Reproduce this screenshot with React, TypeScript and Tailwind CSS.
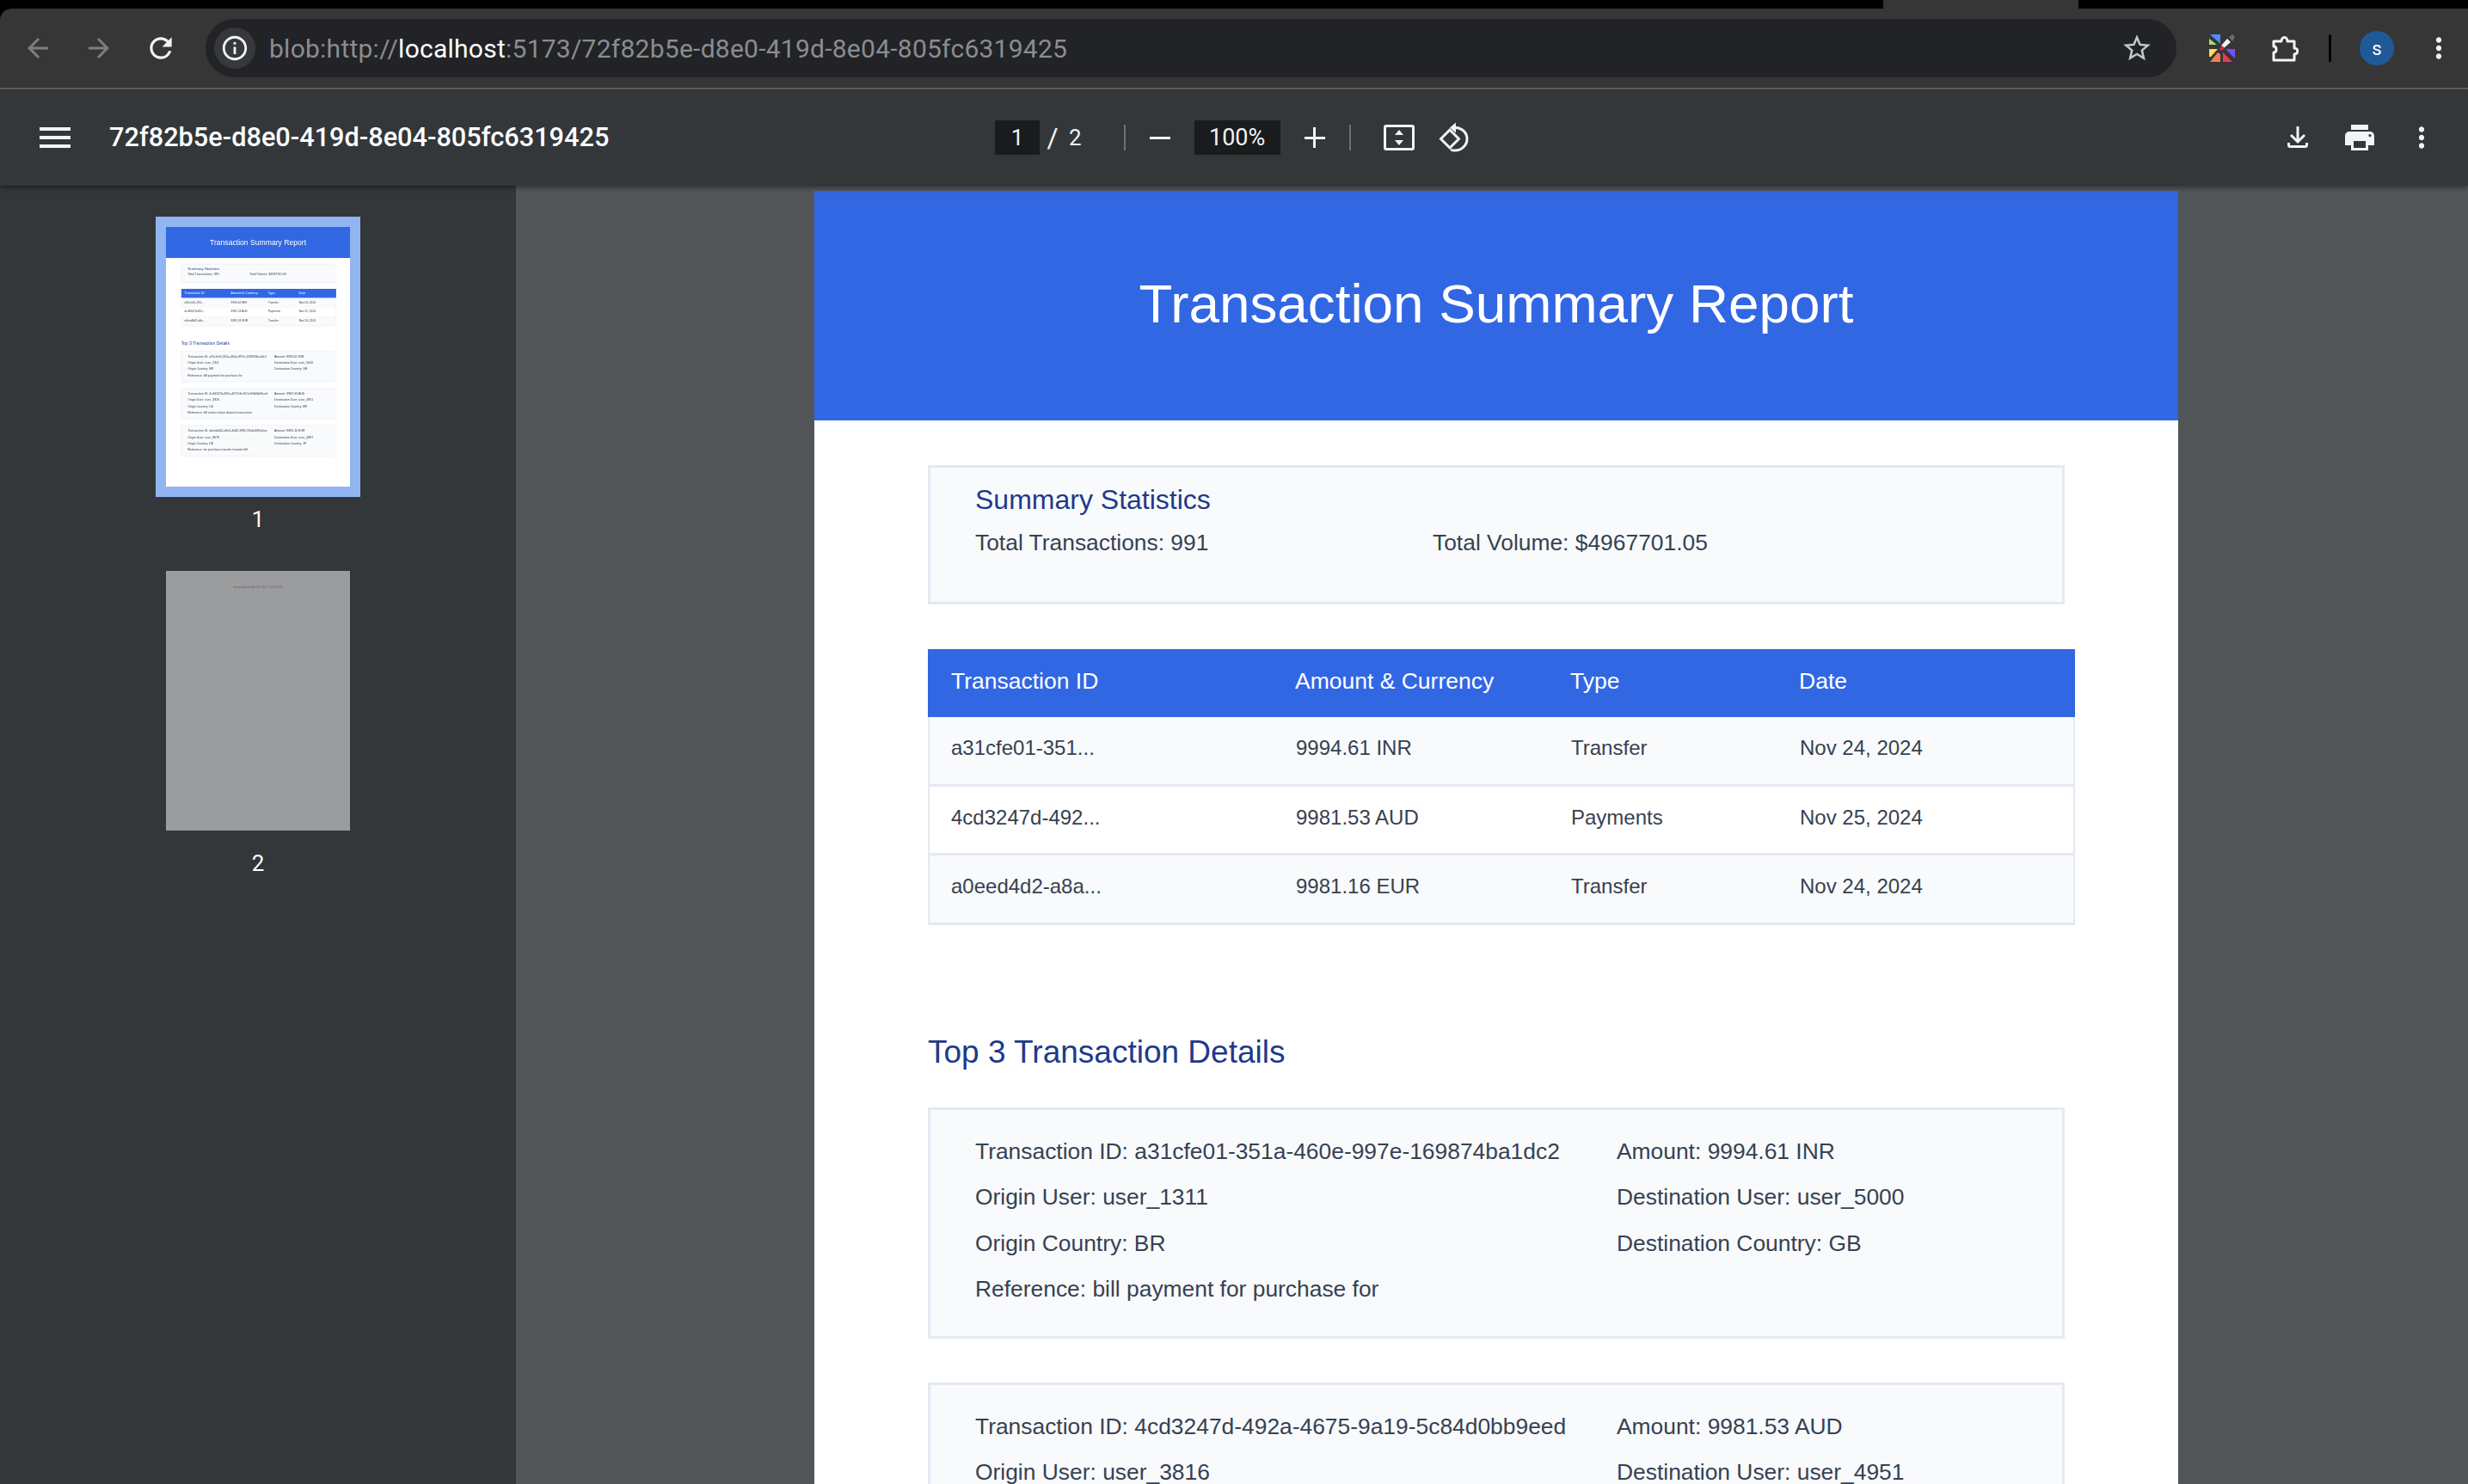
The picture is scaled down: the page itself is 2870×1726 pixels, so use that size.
import { MdArrowBack, MdArrowForward, MdInfoOutline, MdMenu, MdMoreVert, MdRefresh, MdStarBorder } from 'react-icons/md'

const sans = "font-['Liberation_Sans',Arial,sans-serif]"
const ui = "font-['Roboto','Noto_Sans',sans-serif]"

const rows = [
  { id: 'a31cfe01-351...', amount: '9994.61 INR', type: 'Transfer', date: 'Nov 24, 2024' },
  { id: '4cd3247d-492...', amount: '9981.53 AUD', type: 'Payments', date: 'Nov 25, 2024' },
  { id: 'a0eed4d2-a8a...', amount: '9981.16 EUR', type: 'Transfer', date: 'Nov 24, 2024' },
]

const details = [
  {
    id: 'a31cfe01-351a-460e-997e-169874ba1dc2',
    amount: '9994.61 INR',
    from: 'user_1311',
    to: 'user_5000',
    fromCountry: 'BR',
    toCountry: 'GB',
    reference: 'bill payment for purchase for',
  },
  {
    id: '4cd3247d-492a-4675-9a19-5c84d0bb9eed',
    amount: '9981.53 AUD',
    from: 'user_3816',
    to: 'user_4951',
    fromCountry: 'US',
    toCountry: 'BR',
    reference: 'bill tuition tuition deposit transaction',
  },
  {
    id: 'a0eed4d2-a8a5-4a82-9f86-71b4a685a6aa',
    amount: '9981.16 EUR',
    from: 'user_8678',
    to: 'user_4897',
    fromCountry: 'DE',
    toCountry: 'JP',
    reference: 'for purchase transfer transfer bill',
  },
]

const columns = 'grid grid-cols-[400px_320px_266px_348px]'

function Report() {
  return (
    <div className={`min-h-[2241px] w-[1586px] bg-white ${sans}`}>
      <div className="flex h-[267px] items-center justify-center bg-[#3267e3] pb-[4px] text-[63.8px] text-white">
        Transaction Summary Report
      </div>
      <div className="pl-[132px] pt-[52px]">
        <section className="h-[162px] w-[1322px] border-[3px] border-[#e4e9f2] bg-[#f8fafc] pl-[52px] pt-[15px] text-[#374151]">
          <h2 className="text-[32px] leading-[44px] text-[#1e3a8a]">Summary Statistics</h2>
          <div className="mt-[8px] flex text-[26.4px] leading-[40px]">
            <span className="w-[532px]">Total Transactions: 991</span>
            <span>Total Volume: $4967701.05</span>
          </div>
        </section>

        <div className="mt-[52px] w-[1334px]">
          <div className={`${columns} h-[79px] bg-[#3267e3] text-[26.5px] leading-[32px] text-white`}>
            {['Transaction ID', 'Amount & Currency', 'Type', 'Date'].map((label) => (
              <div key={label} className="pl-[27px] pt-[21px]">{label}</div>
            ))}
          </div>
          {rows.map((row, i) => (
            <div
              key={row.id}
              className={`${columns} h-[80.500px] border-x-2 border-b-[3px] border-[#e4e9f2] text-[24px] leading-[32px] text-[#374151] ${
                i % 2 === 0 ? 'bg-[#f8fafc]' : 'bg-white'
              }`}
            >
              <div className="pl-[25px] pt-[20px]">{row.id}</div>
              <div className="pl-[26px] pt-[20px]">{row.amount}</div>
              <div className="pl-[26px] pt-[20px]">{row.type}</div>
              <div className="pl-[26px] pt-[20px]">{row.date}</div>
            </div>
          ))}
        </div>

        <h2 className="mt-[126px] text-[37px] leading-[44px] text-[#1e3a8a]">Top 3 Transaction Details</h2>

        <div className="mt-[42px] flex flex-col gap-[51px]">
          {details.map((d) => (
            <section
              key={d.id}
              className="h-[269px] w-[1322px] border-[3px] border-[#e4e9f2] bg-[#f8fafc] pl-[52px] pt-[22px] text-[26.4px] leading-[53.5px] text-[#374151]"
            >
              <div className="grid grid-cols-[746px_1fr]">
                <div>Transaction ID: {d.id}</div>
                <div>Amount: {d.amount}</div>
                <div>Origin User: {d.from}</div>
                <div>Destination User: {d.to}</div>
                <div>Origin Country: {d.fromCountry}</div>
                <div>Destination Country: {d.toCountry}</div>
                <div className="col-span-2">Reference: {d.reference}</div>
              </div>
            </section>
          ))}
        </div>
      </div>
    </div>
  )
}

function ExtensionIcon() {
  return (
    <svg width="34" height="34" viewBox="0 0 34 34" className="shrink-0">
      <path d="M2 6l9 7H2z" fill="#a3e06c" />
      <path d="M3 1h12v11z" fill="#4b8ff5" />
      <path d="M2 18h10l-8 9H2z" fill="#fbdc5c" />
      <path d="M3 33l9-11 3 2v9z" fill="#ee7d58" />
      <path d="M18 33V22l11 11z" fill="#e8395b" />
      <path d="M21 18h11v11z" fill="#7a4dfa" />
      <path d="M16 14l7-8 4 4-8 7z" fill="#f4f4f4" />
      <path d="M14 18l3-4 3 3-4 3z" fill="#d8293c" />
      <path d="M25 4l4-3 3 3-3 5z" fill="#6e6e6e" />
    </svg>
  )
}

function FitIcon() {
  return (
    <svg width="36" height="30" viewBox="0 0 36 30" className="shrink-0" fill="#f1f3f4">
      <path fillRule="evenodd" d="M3 0h30a3 3 0 0 1 3 3v24a3 3 0 0 1-3 3H3a3 3 0 0 1-3-3V3a3 3 0 0 1 3-3zm0 3v24h30V3z" />
      <path d="M18 6l5 6H13zM18 24l-5-6h10z" />
    </svg>
  )
}

function RotateIcon() {
  return (
    <svg width="36" height="36" viewBox="0 0 36 36" className="shrink-0" fill="none" stroke="#f1f3f4" strokeWidth="3">
      <path d="M2.5 19.5L13 9l10.500 10.500L13 30z" />
      <path d="M16 6.500c8-1.500 17 4 17 13 0 8-7 14-15 13.500-1.500 0-3-.5-4-1" />
      <path d="M20 0.500l-7 6 7 6z" fill="#f1f3f4" stroke="none" />
    </svg>
  )
}

function DownloadIcon() {
  return (
    <svg width="24" height="26" viewBox="0 0 24 26" className="shrink-0" fill="none" stroke="#f1f3f4" strokeWidth="3">
      <path d="M12 0v17M4 10l8 8 8-8" />
      <path d="M1.500 19v2.500a2 2 0 0 0 2 2h17a2 2 0 0 0 2-2V19" />
    </svg>
  )
}

function PrintIcon() {
  return (
    <svg width="34" height="30" viewBox="0 0 34 30" className="shrink-0" fill="#f1f3f4">
      <path d="M7 0h20v6H7z" />
      <path fillRule="evenodd" d="M5 8h24a5 5 0 0 1 5 5v11h-7v6H7v-6H0V13a5 5 0 0 1 5-5zm5 11v8h14v-8zm19-8a1.600 1.600 0 1 0 0 3.200 1.600 1.600 0 0 0 0-3.200z" />
    </svg>
  )
}

function PuzzleIcon() {
  return (
    <svg width="32" height="32" viewBox="0 0 32 32" className="shrink-0" fill="none" stroke="#f1f3f4" strokeWidth="3">
      <path d="M3 8h9c0-6 7-6 7 0h8v8c5 0 5 7 0 7v7H3v-9c4 0 4-7 0-7z" strokeLinejoin="round" />
    </svg>
  )
}

function Thumbnail({ n, selected }: { n: number; selected?: boolean }) {
  return (
    <div className="flex flex-col items-center">
      <div className={`border-[12px] ${selected ? 'border-[#91b4f2]' : 'border-transparent'}`}>
        {selected ? (
          <div className="h-[302px] w-[214px] overflow-hidden blur-[0.6px]">
            <div className="origin-top-left scale-[0.135]">
              <Report />
            </div>
          </div>
        ) : (
          <div className={`h-[302px] w-[214px] bg-[#9b9c9e] pt-[17px] text-center text-[3.2px] leading-[4px] text-[#5f5f68] ${sans}`}>
            Generated on Nov 26, 2024, 7:07:00 PM
          </div>
        )}
      </div>
      <div className={`mt-[6px] h-[40px] text-[26px] leading-[40px] text-white ${ui}`}>{n}</div>
    </div>
  )
}

export default function App() {
  return (
    <div className={`flex h-[1726px] w-[2870px] flex-col overflow-hidden bg-black ${ui}`}>
      <div className="relative h-[10px] shrink-0">
        <div className="absolute left-[2190px] top-0 h-[10px] w-[227px] bg-[#363636]" />
      </div>

      {/* browser toolbar */}
      <div className="flex h-[94px] shrink-0 items-start rounded-tl-[14px] border-b-2 border-[#5f6163] bg-[#363636] pl-[26px] pt-[12px]">
        <div className="flex h-[68px] items-center text-[#7c7e80]">
          <MdArrowBack size={36} />
          <MdArrowForward size={36} className="ml-[35px]" />
          <MdRefresh size={38} className="ml-[35px] text-[#f1f3f4]" />
        </div>
        <div className="ml-[33px] flex h-[68px] w-[2292px] items-center rounded-full bg-[#222326] pl-[10px] pr-[27px]">
          <div className="flex h-[48px] w-[48px] items-center justify-center rounded-full bg-[#36383c] text-[#f1f3f4]">
            <MdInfoOutline size={34} />
          </div>
          <div className="ml-[16px] text-[30px] tracking-[0.25px] text-[#8b8d90]">
            blob:http://<span className="text-white">localhost</span>:5173/72f82b5e-d8e0-419d-8e04-805fc6319425
          </div>
          <MdStarBorder size={38} className="ml-auto text-[#c4c7c9]" />
        </div>
        <div className="ml-[36px] flex h-[68px] items-center">
          <ExtensionIcon />
          <div className="ml-[40px]"><PuzzleIcon /></div>
          <div className="ml-[35px] h-[32px] w-[3px] rounded-full bg-black" />
          <div className="ml-[33px] flex h-[40px] w-[40px] items-center justify-center rounded-full bg-[#1f5a97] text-[22px] text-white">
            s
          </div>
          <MdMoreVert size={38} className="ml-[33px] text-[#f1f3f4]" />
        </div>
      </div>

      {/* pdf viewer toolbar */}
      <div className="relative z-10 flex h-[112px] shrink-0 items-center bg-[#33373a] pl-[40px] pr-[35px] text-[#f1f3f4] shadow-[0_2px_6px_rgba(0,0,0,0.45)]">
        <MdMenu size={48} />
        <div className="ml-[39px] w-[630px] text-[30.7px] font-medium text-white">72f82b5e-d8e0-419d-8e04-805fc6319425</div>
        <div className="ml-[400px] flex h-[40px] items-center text-[26px]">
          <div className="flex h-[40px] w-[52px] items-center justify-center bg-[#191b1c]">1</div>
          <span className="ml-[5px] w-[20px] text-center text-[32px]">/</span>
          <span className="ml-[9px]">2</span>
          <div className="ml-[49px] h-[30px] w-[2px] bg-[#6f7275]" />
          <div className="ml-[28px] h-[3px] w-[24px] bg-[#f1f3f4]" />
          <div className="ml-[28px] flex h-[40px] w-[100px] items-center justify-center bg-[#191b1c] text-[27px]">100%</div>
          <div className="relative ml-[28px] h-[24px] w-[24px]">
            <div className="absolute left-0 top-[10.500px] h-[3px] w-[24px] bg-[#f1f3f4]" />
            <div className="absolute left-[10.500px] top-0 h-[24px] w-[3px] bg-[#f1f3f4]" />
          </div>
          <div className="ml-[28px] h-[30px] w-[2px] bg-[#6f7275]" />
          <div className="ml-[38px]"><FitIcon /></div>
          <div className="ml-[28px]"><RotateIcon /></div>
        </div>
        <div className="ml-auto"><DownloadIcon /></div>
        <div className="ml-[43px]"><PrintIcon /></div>
        <MdMoreVert size={38} className="ml-[36px]" />
      </div>

      <div className="flex min-h-0 flex-1">
        <aside className="flex w-[600px] shrink-0 flex-col items-center gap-[28px] bg-[#33373a] pt-[36px]">
          <Thumbnail n={1} selected />
          <Thumbnail n={2} />
        </aside>
        <main className="min-w-0 flex-1 overflow-hidden bg-[#525659] pl-[347px] pt-[6px]">
          <Report />
        </main>
      </div>
    </div>
  )
}
